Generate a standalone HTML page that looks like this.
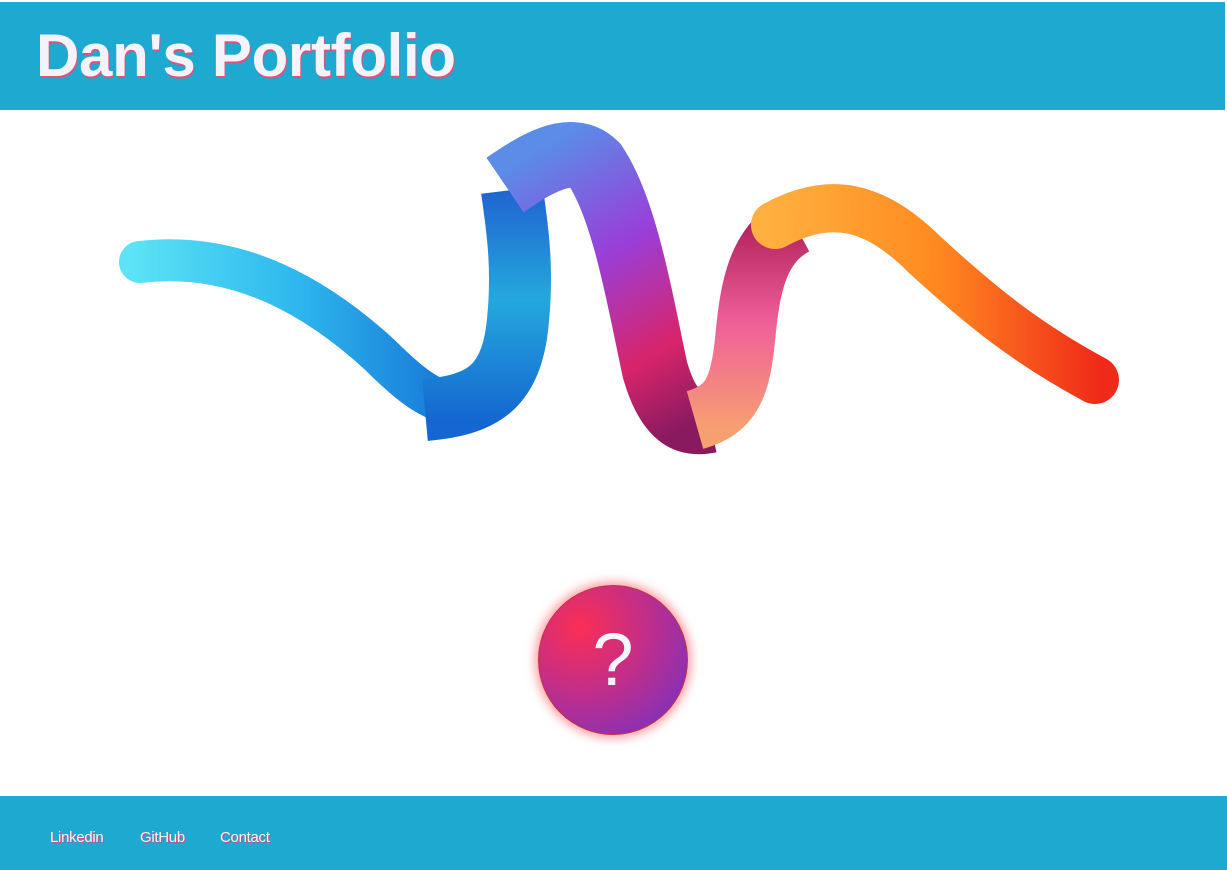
<!DOCTYPE html>
<html><head><style>
html,body{margin:0;padding:0;width:1227px;height:870px;background:#fff;overflow:hidden;font-family:"Liberation Sans",Arial,sans-serif}
header{position:absolute;top:2px;left:0;width:1225px;height:108px;background:#1ea9d1}
h1{margin:0;position:absolute;left:36px;top:24px;font-size:60px;font-weight:bold;color:#f3f3fb;text-shadow:1px 2px 0 #e0507a;line-height:1;letter-spacing:-0.3px}
footer{position:absolute;top:796px;left:0;width:1227px;height:74px;background:#1ea9d1}
footer a{position:absolute;top:33px;font-size:15px;color:#f5f5fa;text-decoration:none;text-shadow:1px 1px 0 #d04a80;letter-spacing:-0.3px}
.c{position:absolute;left:538px;top:585px;width:148px;height:148px;border-radius:50%;border:1px solid #c8303a;background:radial-gradient(circle at 28% 28%,#fb2e55 0%,#c02e8a 45%,#6a32cc 100%);box-shadow:0 0 10px 3px rgba(255,70,80,.55);color:#f4f4fb;font-size:74px;text-align:center;line-height:148px}
</style></head><body>
<header><h1>Dan's Portfolio</h1></header>
<svg style="position:absolute;left:0;top:0" width="1227" height="870">
<defs>
<linearGradient id="g1" x1="130" y1="0" x2="450" y2="0" gradientUnits="userSpaceOnUse"><stop offset="0" stop-color="#5de3f5"/><stop offset=".5" stop-color="#2fb9ee"/><stop offset="1" stop-color="#1678d8"/></linearGradient>
<linearGradient id="g2" x1="0" y1="420" x2="0" y2="180" gradientUnits="userSpaceOnUse"><stop offset="0" stop-color="#1467d0"/><stop offset=".5" stop-color="#24a8dc"/><stop offset="1" stop-color="#1f5ed0"/></linearGradient>
<linearGradient id="g3" x1="520" y1="160" x2="680" y2="430" gradientUnits="userSpaceOnUse"><stop offset="0" stop-color="#5a8ce8"/><stop offset=".4" stop-color="#9a3ed8"/><stop offset=".75" stop-color="#d8246a"/><stop offset="1" stop-color="#8a1a60"/></linearGradient>
<linearGradient id="g4" x1="0" y1="430" x2="0" y2="220" gradientUnits="userSpaceOnUse"><stop offset="0" stop-color="#f6a070"/><stop offset=".5" stop-color="#f0609a"/><stop offset="1" stop-color="#b0205a"/></linearGradient>
<linearGradient id="g5" x1="770" y1="0" x2="1100" y2="0" gradientUnits="userSpaceOnUse"><stop offset="0" stop-color="#ffb040"/><stop offset=".5" stop-color="#ff8a20"/><stop offset="1" stop-color="#f02a18"/></linearGradient>
</defs>
<path d="M140 262 C240 250 320 300 380 355 C410 385 430 400 455 405" stroke="url(#g1)" stroke-width="42" fill="none" stroke-linecap="round"/>
<path d="M425 410 C480 405 512 390 518 320 C524 260 515 215 512 190" stroke="url(#g2)" stroke-width="62" fill="none"/>
<path d="M505 185 C530 168 570 140 595 165 C625 210 640 300 655 370 C668 415 685 425 710 420" stroke="url(#g3)" stroke-width="66" fill="none"/>
<path d="M695 420 C730 410 740 390 745 340 C750 285 758 245 795 225" stroke="url(#g4)" stroke-width="60" fill="none"/>
<path d="M775 225 C830 195 875 205 925 255 C985 310 1030 345 1095 380" stroke="url(#g5)" stroke-width="48" fill="none" stroke-linecap="round"/>
</svg>
<div class="c">?</div>
<footer><a style="left:50px">Linkedin</a><a style="left:140px">GitHub</a><a style="left:220px">Contact</a></footer>
</body></html>
